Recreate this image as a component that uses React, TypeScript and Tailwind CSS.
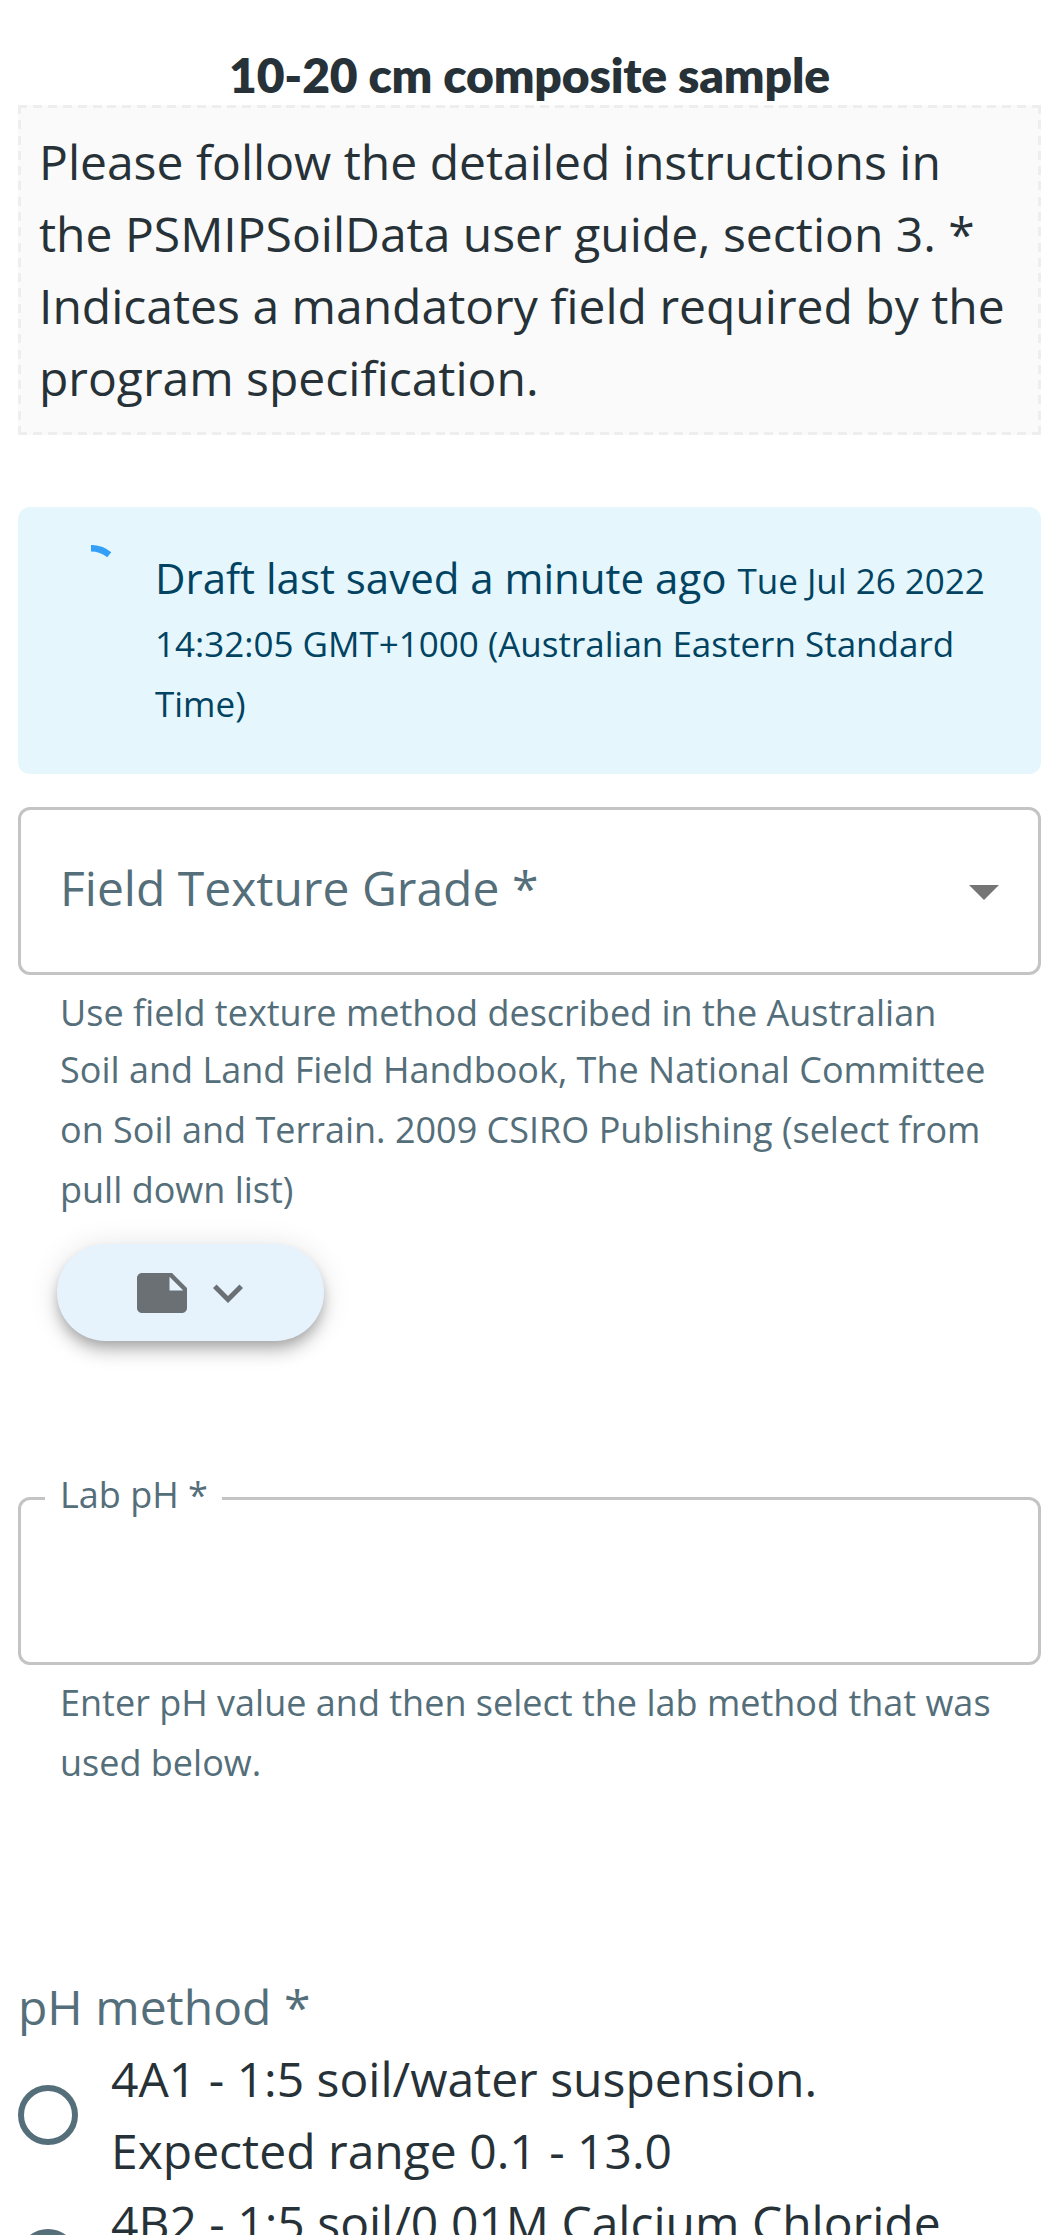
import React from "react";

function Radio({ children }: { children: React.ReactNode }) {
  return (
    <label className="flex h-[144px] items-center">
      <span className="size-[60px] shrink-0 rounded-full border-[6px] border-[#546e7a]" />
      <span className="ml-[33px] self-start text-[48px] leading-[72px] text-[#263238]">{children}</span>
    </label>
  );
}

export default function App() {
  return (
    <main className="h-[2235px] overflow-hidden bg-white px-[18px] pt-[45px] font-['Open_Sans',sans-serif] text-[#263238]">
      <h1 className="h-[60px] text-center font-['Lato',sans-serif] text-[48px] leading-[60px] font-extrabold tracking-[-0.17px]">
        10-20 cm composite sample
      </h1>
      {/* Long dashes drawn as four repeating gradients, one for each edge */}
      <div className="h-[330px] bg-[#fafafa] bg-[image:repeating-linear-gradient(90deg,#eee_0_9px,transparent_9px_14.912px),repeating-linear-gradient(90deg,#eee_0_9px,transparent_9px_14.912px),repeating-linear-gradient(180deg,#eee_0_9px,transparent_9px_15.286px),repeating-linear-gradient(180deg,#eee_0_9px,transparent_9px_15.286px)] bg-[size:100%_3px,100%_3px,3px_100%,3px_100%] bg-[position:0_0,0_100%,0_0,100%_0] bg-no-repeat p-[21px] text-[48px] leading-[72px]">
        Please follow the detailed instructions in
        <br />
        the PSMIPSoilData user guide, section 3. *
        <br />
        Indicates a mandatory field required by the
        <br />
        program specification.
      </div>

      <section className="mt-[72px] flex h-[267px] rounded-[12px] bg-[#e5f6fd] pl-[36px] pt-[38px] text-[#014361]">
        <svg viewBox="0 0 72 72" className="size-[72px] shrink-0" fill="none">
          <path d="M37 3.2A28.4 28.4 0 0 1 55.25 9.85" stroke="#339ff6" strokeWidth="6.5" />
        </svg>
        <div className="ml-[29px] text-[35px]">
          <p className="h-[60px] text-[42px] leading-[66px]">
            Draft last saved a minute ago <small className="text-[35px] leading-none">Tue Jul 26 2022</small>
          </p>
          <p className="pt-[9px] leading-[60px]">
            14:32:05 GMT+1000 (Australian Eastern Standard
            <br />
            Time)
          </p>
        </div>
      </section>

      <section className="mt-[33px]">
        <div className="flex h-[168px] items-center justify-between rounded-[12px] border-[3px] border-[#c4c4c4] pr-[18px] pl-[39px] text-[48px] leading-[72px] text-[#546e7a]">
          <span className="mb-[6px]">Field Texture Grade *</span>
          <svg viewBox="0 0 24 24" className="size-[72px]" fill="#757575">
            <path d="M7 10l5 5 5-5z" />
          </svg>
        </div>
        <p className="mt-[8px] h-[240px] px-[42px] text-[36px] leading-[60px] text-[#546e7a]">
          <span className="block h-[57px]">Use field texture method described in the Australian</span>
          Soil and Land Field Handbook, The National Committee
          <br />
          on Soil and Terrain. 2009 CSIRO Publishing (select from
          <br />
          pull down list)
        </p>
        <button className="mt-[21px] ml-[39px] flex h-[97px] w-[267px] items-center gap-[6px] rounded-full bg-[#e6f3fd] pl-[75px] text-[#6a7074] shadow-[0_6px_12px_-3px_rgba(0,0,0,0.2),0_12px_15px_0_rgba(0,0,0,0.14),0_3px_30px_0_rgba(0,0,0,0.12)]">
          <svg viewBox="0 0 24 24" className="size-[60px]" fill="currentColor">
            <path d="M22 10l-6-6H4c-1.1 0-2 .9-2 2v12.01c0 1.1.9 1.99 2 1.99l16-.01c1.1 0 2-.89 2-2v-8zm-7-4.5l5.5 5.5H15V5.5z" />
          </svg>
          <svg viewBox="0 0 24 24" className="size-[60px]" fill="currentColor">
            <path d="M16.59 8.59L12 13.17 7.41 8.59 6 10l6 6 6-6z" />
          </svg>
        </button>
      </section>

      <section className="mt-[156px]">
        <div className="relative h-[168px] rounded-[12px] border-[3px] border-[#c4c4c4]">
          <span className="absolute -top-[32px] left-[24px] w-[177px] bg-white pl-[15px] text-[36px] leading-[54px] text-[#546e7a]">
            Lab pH *
          </span>
        </div>
        <p className="mt-[8px] px-[42px] text-[36px] leading-[60px] text-[#546e7a]">
          Enter pH value and then select the lab method that was
          <br />
          used below.
        </p>
      </section>

      <section className="mt-[178px]">
        <h2 className="text-[48px] leading-[72px] text-[#546e7a]">pH method *</h2>
        <Radio>
          4A1 - 1:5 soil/water suspension.
          <br />
          Expected range 0.1 - 13.0
        </Radio>
        <Radio>4B2 - 1:5 soil/0.01M Calcium Chloride</Radio>
      </section>
    </main>
  );
}
